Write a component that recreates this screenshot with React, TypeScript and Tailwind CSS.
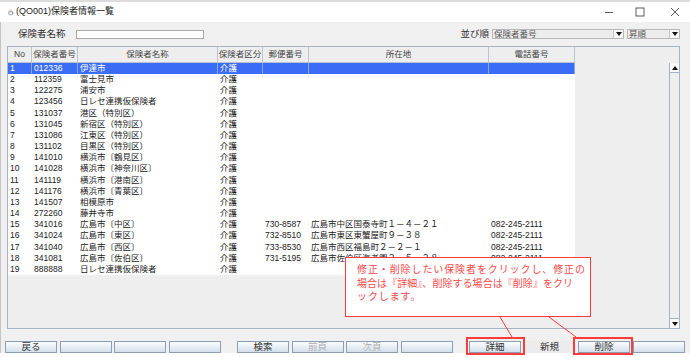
import React from 'react';

type Row = {
  no: number;
  code: string;
  name: string;
  kind: string;
  zip?: string;
  addr?: string;
  tel?: string;
};

const rows: Row[] = [
  { no: 1, code: '012336', name: '伊達市', kind: '介護' },
  { no: 2, code: '112359', name: '富士見市', kind: '介護' },
  { no: 3, code: '122275', name: '浦安市', kind: '介護' },
  { no: 4, code: '123456', name: '日レセ連携仮保険者', kind: '介護' },
  { no: 5, code: '131037', name: '港区（特別区）', kind: '介護' },
  { no: 6, code: '131045', name: '新宿区（特別区）', kind: '介護' },
  { no: 7, code: '131086', name: '江東区（特別区）', kind: '介護' },
  { no: 8, code: '131102', name: '目黒区（特別区）', kind: '介護' },
  { no: 9, code: '141010', name: '横浜市〔鶴見区〕', kind: '介護' },
  { no: 10, code: '141028', name: '横浜市〔神奈川区〕', kind: '介護' },
  { no: 11, code: '141119', name: '横浜市〔港南区〕', kind: '介護' },
  { no: 12, code: '141176', name: '横浜市〔青葉区〕', kind: '介護' },
  { no: 13, code: '141507', name: '相模原市', kind: '介護' },
  { no: 14, code: '272260', name: '藤井寺市', kind: '介護' },
  { no: 15, code: '341016', name: '広島市〔中区〕', kind: '介護', zip: '730-8587', addr: '広島市中区国泰寺町１－４－２１', tel: '082-245-2111' },
  { no: 16, code: '341024', name: '広島市〔東区〕', kind: '介護', zip: '732-8510', addr: '広島市東区東蟹屋町９－３８', tel: '082-245-2111' },
  { no: 17, code: '341040', name: '広島市〔西区〕', kind: '介護', zip: '733-8530', addr: '広島市西区福島町２－２－１', tel: '082-245-2111' },
  { no: 18, code: '341081', name: '広島市〔佐伯区〕', kind: '介護', zip: '731-5195', addr: '広島市佐伯区海老園２－５－２８', tel: '082-245-2111' },
  { no: 19, code: '888888', name: '日レセ連携仮保険者', kind: '介護' },
];

const headers = ['No', '保険者番号', '保険者名称', '保険者区分', '郵便番号', '所在地', '電話番号'];

const gridCols = 'grid grid-cols-[24px_46px_140px_45px_46px_180px_86px]';

const Arrow = ({ up }: { up?: boolean }) => (
  <svg width="6" height="4" viewBox="0 0 6 4">
    <polygon points={up ? '0,4 6,4 3,0' : '0,0 6,0 3,4'} fill="#111" />
  </svg>
);

const Select = ({ text, width }: { text: string; width: string }) => (
  <div className={`flex h-[10px] items-stretch border border-[#b8b8b8] bg-[#ececec] ${width}`}>
    <span className="flex-1 pl-[1px] text-[8.5px] leading-[8px] text-[#555]">{text}</span>
    <span className="flex w-[10px] items-center justify-center border-l border-[#c8c8c8] bg-[#f6f6f6]">
      <Arrow />
    </span>
  </div>
);

const Btn = ({ label, disabled, flat }: { label?: string; disabled?: boolean; flat?: boolean }) => (
  <div
    className={`flex h-[12px] w-[52px] items-center justify-center text-[9.5px] leading-none ${
      flat
        ? 'bg-[#ececec] text-[#333]'
        : 'border border-[#8a9fb4] bg-gradient-to-b from-[#fbfdff] to-[#d3dfeb] ' +
          (disabled ? 'text-[#b0b0b0]' : 'text-[#333]')
    }`}
  >
    {label}
  </div>
);

export default function App() {
  return (
    <div className="relative h-[357px] w-[690px] overflow-hidden bg-white font-['Liberation_Sans','Noto_Sans_CJK_JP',sans-serif] text-[#222]">
      <div className="h-[2px] bg-[#dcdcdc]" />
      {/* title bar */}
      <div className="flex h-[20px] items-center bg-white pl-[8px]">
        <svg width="6" height="7" viewBox="0 0 8 8" className="mr-[2px]">
          <path d="M1 3 h5 v3 a1 1 0 0 1 -1 1 h-3 a1 1 0 0 1 -1 -1 z" fill="none" stroke="#6b7f95" strokeWidth="0.9" />
          <path d="M6 4 h1 v1 h-1" fill="none" stroke="#6b7f95" strokeWidth="0.8" />
          <path d="M3 0.5 q-1 1 0 2 M4.5 0.5 q-1 1 0 2" fill="none" stroke="#d9643a" strokeWidth="0.8" />
        </svg>
        <span className="text-[9px] text-[#222]">(QO001)保険者情報一覧</span>
        <div className="ml-auto flex items-center">
          <svg width="10" height="10" viewBox="0 0 10 10" className="mr-[21px]">
            <line x1="1" y1="5.5" x2="9" y2="5.5" stroke="#333" strokeWidth="0.8" />
          </svg>
          <svg width="10" height="10" viewBox="0 0 10 10" className="mr-[25px]">
            <rect x="1" y="1" width="8" height="8" fill="none" stroke="#333" strokeWidth="0.8" />
          </svg>
          <svg width="10" height="10" viewBox="0 0 10 10" className="mr-[10px]">
            <path d="M1 1 L9 9 M9 1 L1 9" stroke="#333" strokeWidth="0.8" />
          </svg>
        </div>
      </div>

      <div className="flex h-[331px] flex-col border-l border-[#c4c4c4] bg-[#f0f0f0]">
        {/* search bar */}
        <div className="flex h-[24px] items-center pl-[17px] pr-[10px]">
          <span className="text-[9.5px] text-[#333]">保険者名称</span>
          <div className="ml-[10px] h-[9px] w-[128px] border border-[#a8a8a8] bg-white" />
          <span className="ml-auto mr-[3px] text-[9.5px] text-[#333]">並び順</span>
          <Select text="保険者番号" width="w-[132px]" />
          <div className="w-[3px]" />
          <Select text="昇順" width="w-[53px]" />
        </div>

        {/* table */}
        <div className="ml-[6px] flex h-[283px] w-[673px] border border-[#a6b3c0] bg-[#eeeeee]">
          <div className="w-[567px]">
            <div className={`${gridCols} h-[16px] bg-[#eeeeee]`}>
              {headers.map((h) => (
                <div
                  key={h}
                  className="flex items-center justify-center border-b border-r border-[#b9c4cf] text-[8.5px] text-[#444]"
                >
                  {h}
                </div>
              ))}
            </div>
            <div className="bg-white">
              {rows.map((r) => {
                const sel = r.no === 1;
                const cells = [String(r.no), r.code, r.name, r.kind, r.zip ?? '', r.addr ?? '', r.tel ?? ''];
                return (
                  <div
                    key={r.no}
                    className={`${gridCols} h-[11.17px] text-[8.5px] leading-[11px] ${
                      sel ? 'bg-[#3b6cf6] text-white' : 'text-[#222]'
                    }`}
                  >
                    {cells.map((c, i) => (
                      <div
                        key={i}
                        className={`overflow-visible whitespace-nowrap pl-[2px] ${
                          sel ? 'border-r border-[#8aa6f8]' : ''
                        }`}
                      >
                        {c}
                      </div>
                    ))}
                  </div>
                );
              })}
            </div>
          </div>
          <div className="flex-1" />
          {/* scrollbar */}
          <div className="flex w-[10px] flex-col pt-[16px]">
            <div className="flex flex-1 flex-col border-l border-[#a6b3c0] bg-[#eeeeee]">
              <div className="flex h-[10px] items-center justify-center border-b border-[#a6b3c0] bg-[#f8f8f8]">
                <Arrow up />
              </div>
              <div className="flex-1" />
              <div className="flex h-[10px] items-center justify-center border-t border-[#a6b3c0] bg-[#f8f8f8]">
                <Arrow />
              </div>
            </div>
          </div>
        </div>

        {/* buttons */}
        <div className="mt-[12px] flex pl-[4px]">
          <div className="flex gap-[2.5px]">
            <Btn label="戻る" />
            <Btn />
            <Btn />
            <Btn />
          </div>
          <div className="ml-[16.5px] flex gap-[2.5px]">
            <Btn label="検索" />
            <Btn label="前頁" disabled />
            <Btn label="次頁" disabled />
            <Btn />
          </div>
          <div className="ml-[16.5px] flex gap-[2.5px]">
            <Btn label="詳細" />
            <Btn label="新規" flat />
            <Btn label="削除" />
            <Btn />
          </div>
        </div>
      </div>

      {/* annotation */}
      <div className="absolute left-[345px] top-[257px] h-[60px] w-[246px] border-[1.5px] border-[#ff3a3a] bg-white pl-[11px] pt-[4px] font-['Noto_Sans_CJK_JP',sans-serif] text-[10px] leading-[13.5px] text-[#ff4a4a]">
        <div className="whitespace-nowrap tracking-[0.9px]">修正・削除したい保険者をクリックし、修正の</div>
        <div className="whitespace-nowrap tracking-[0.05px]">場合は『詳細』、削除する場合は『削除』をクリ</div>
        <div className="whitespace-nowrap tracking-[0.9px]">ックします。</div>
      </div>
      <div className="absolute left-[466px] top-[337px] h-[18px] w-[59px] border-2 border-[#ff3a3a]" />
      <div className="absolute left-[573px] top-[337px] h-[18px] w-[60px] border-2 border-[#ff3a3a]" />
      <svg className="pointer-events-none absolute left-0 top-0" width="690" height="357">
        <line x1="500" y1="317" x2="512" y2="337" stroke="#ff3a3a" strokeWidth="1" />
        <line x1="549" y1="317" x2="576" y2="337" stroke="#ff3a3a" strokeWidth="1" />
      </svg>
    </div>
  );
}
